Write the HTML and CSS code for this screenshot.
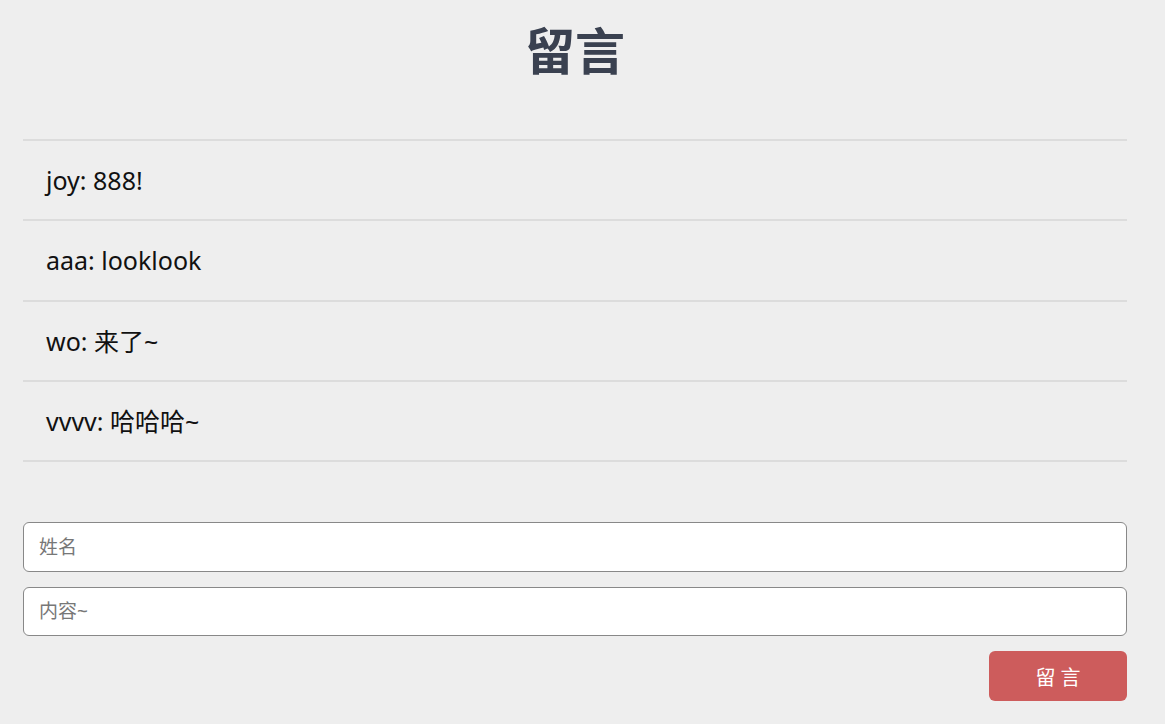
FILE: index.html
```html
<!DOCTYPE html>
<html lang="zh">
<head>
  <meta charset="UTF-8">
  <meta name="viewport" content="width=device-width, initial-scale=1.0">
  <title>留言</title>
  <link rel="stylesheet" href="styles.css">
</head>
<body>

  <div class="wrap">
    <h1>留言</h1>

    <ul class="list" id="list">
      <li>joy: 888!</li>
      <li>aaa: looklook</li>
      <li>wo: 来了~</li>
      <li>vvvv: 哈哈哈~</li>
    </ul>

    <div class="form">
      <input type="text" id="name" placeholder="姓名">
      <input type="text" id="content" placeholder="内容~">
      <div class="actions">
        <button onclick="addMsg()">留 言</button>
      </div>
    </div>
  </div>

  <script>
    function addMsg() {
      const name = document.getElementById("name").value.trim();
      const content = document.getElementById("content").value.trim();
      if (!name || !content) return;
      const li = document.createElement("li");
      li.textContent = name + ": " + content;
      document.getElementById("list").appendChild(li);
      document.getElementById("content").value = "";
    }
  </script>

</body>
</html>
```

FILE: styles.css
```css
body { margin: 0; background: #eee; color: #111; font-family: "Noto Sans", "Noto Sans CJK SC", sans-serif; }
.wrap { margin: 0 38px 0 23px; padding-bottom: 40px; }
h1 { margin: 0; padding-top: 22px; height: 139px; box-sizing: border-box; text-align: center; font-size: 50px; line-height: 52px; color: #3a4150; font-weight: 700; font-family: "Noto Sans CJK SC", sans-serif; }
.list { list-style: none; margin: 0; padding: 0; border-top: 2px solid #dcdcdc; }
.list li { padding: 0 23px; line-height: 78.25px; font-size: 25px; border-bottom: 2px solid #dcdcdc; }
.form { margin-top: 60px; display: flex; flex-direction: column; gap: 15px; }
.form input { height: 49.5px; box-sizing: border-box; border: 1px solid #888; border-radius: 6px; background: #fff; padding: 0 15px; font-size: 19px; font-family: inherit; outline: none; }
.form input::placeholder { color: #777; }
.actions { display: flex; justify-content: flex-end; }
.actions button { width: 138px; height: 50px; border: none; border-radius: 6px; background: #cd5c5c; color: #fff; font-size: 20px; font-family: inherit; cursor: pointer; }
```
